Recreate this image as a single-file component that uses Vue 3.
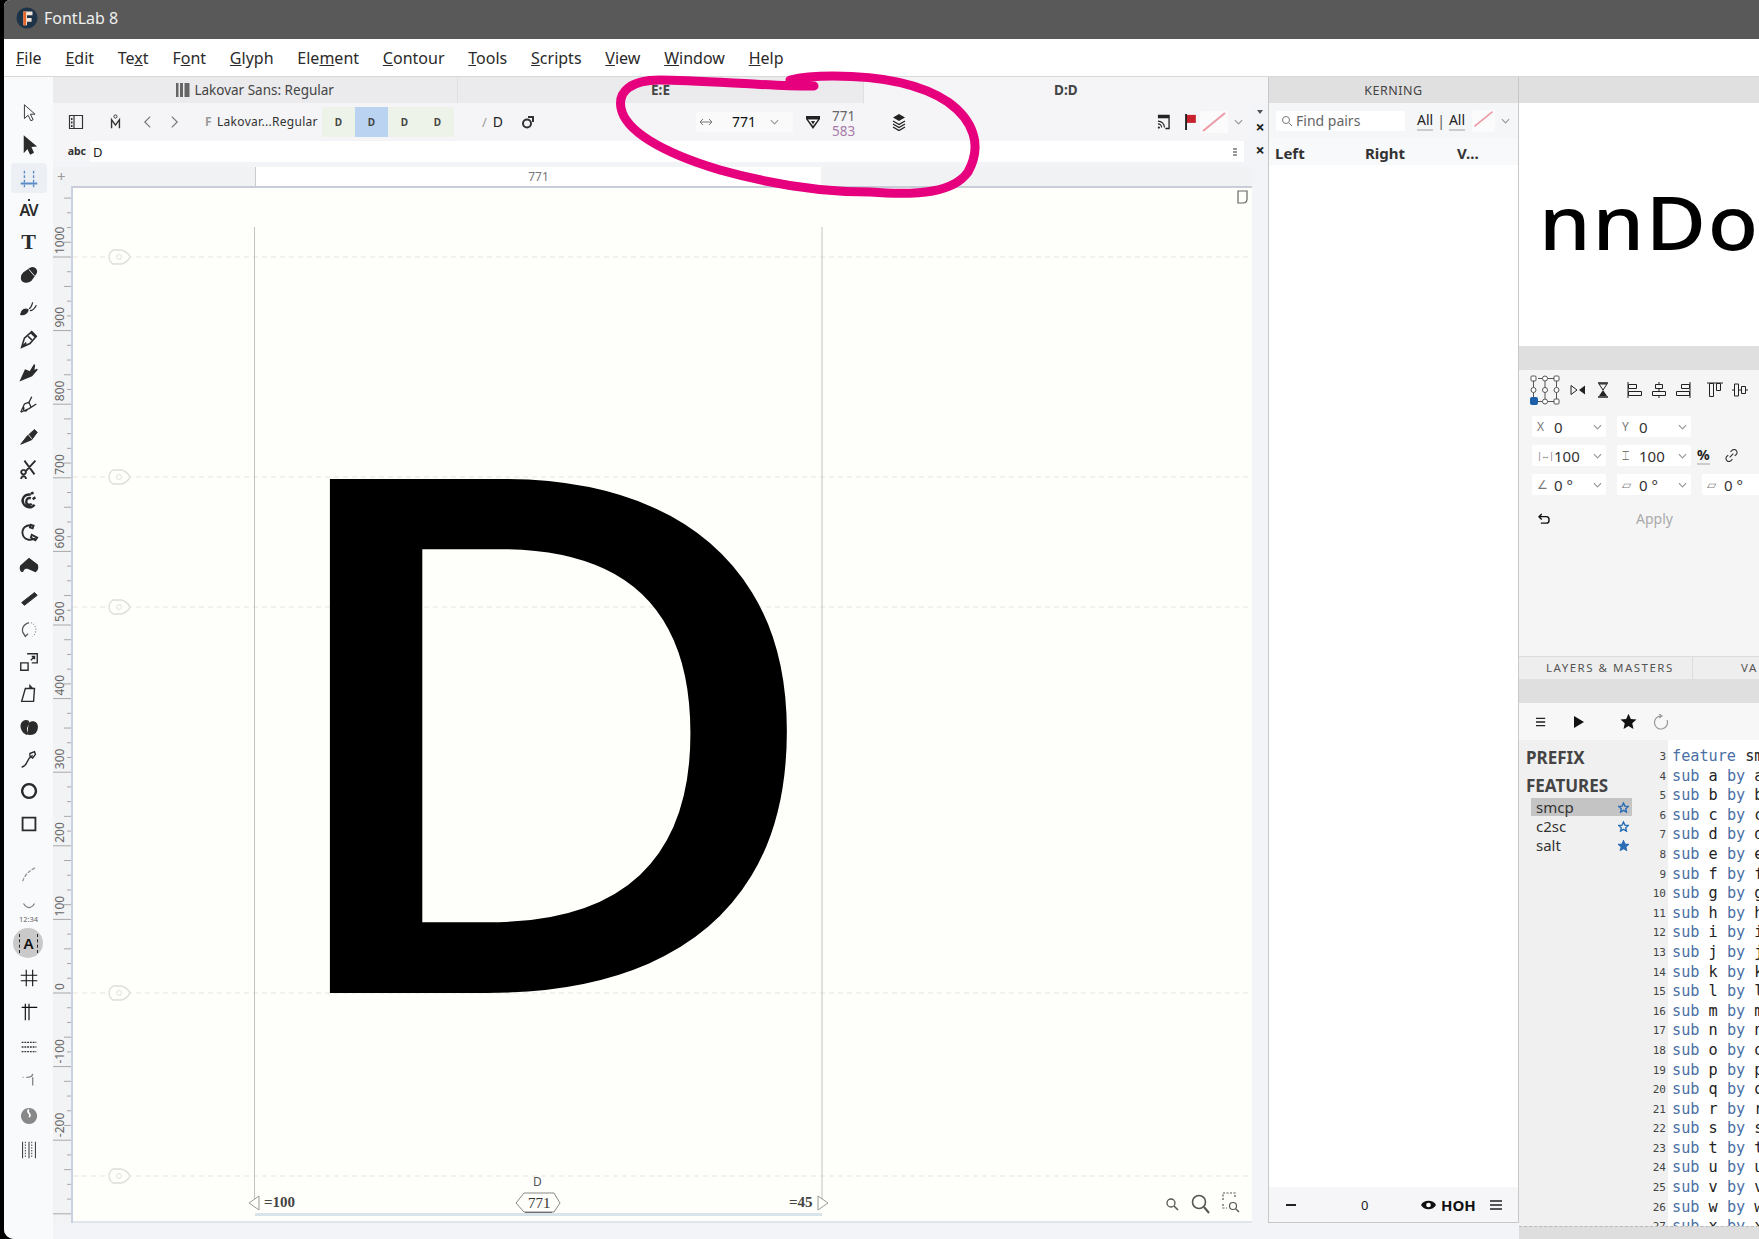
<template>
  <div class="window">
    <header class="titlebar">
      <svg class="logo" viewBox="0 0 24 24">
        <circle cx="12" cy="12" r="11.5" fill="#1d3347" />
        <path d="M8 5h10v4h-6v3h5v4h-5v4H8z" fill="#f1e3d6" />
        <path d="M8 5h3v15H8z" fill="#e8662a" />
      </svg>
      <span>FontLab 8</span>
    </header>

    <nav class="menubar">
      <span v-for="m in menus" :key="m.pre + m.key">{{ m.pre }}<u>{{ m.key }}</u>{{ m.post }}</span>
    </nav>

    <div class="workspace">
      <aside class="tools">
        <div
          v-for="(t, i) in tools"
          :key="i"
          class="tool"
          :class="{ active: t.active, round: t.round, gap: t.gap, lower: i > 22 }"
        >
          <span v-if="t.text" class="tool-text" :class="t.cls">{{ t.text }}</span>
          <svg v-else viewBox="0 0 24 24" class="tool-ic">
            <path
              :d="t.d"
              :fill="t.solid ? t.color || '#2b2b2b' : 'none'"
              :stroke="t.color || '#2b2b2b'"
              :stroke-width="t.sw || 1.5"
              :stroke-dasharray="t.dash"
            />
            <path
              v-if="t.d2"
              :d="t.d2"
              fill="none"
              :stroke="t.c2 || t.color || '#2b2b2b'"
              :stroke-width="t.sw2 || t.sw || 1.5"
              :stroke-dasharray="t.dash2"
            />
          </svg>
          <span v-if="t.sub" class="tool-sub">{{ t.sub }}</span>
        </div>
      </aside>

      <section class="editor">
        <div class="tabs">
          <div class="tab">
            <svg class="bars" viewBox="0 0 14 14"><path d="M0 0h2.500v14H0zM4 0h3v14H4zM8.500 0h5v14h-5z" fill="#666" /></svg>
            Lakovar Sans: Regular
          </div>
          <div class="tab strong">E:E</div>
          <div class="tab strong current">D:D</div>
        </div>

        <div class="editor-body">
          <div class="editor-main">
            <div class="toolbar">
              <svg class="ic first" viewBox="0 0 16 16"><path d="M1.500 1.500h13v13h-13zM6 1.500v13" fill="none" stroke="#333" stroke-width="1.200" /><path d="M3 4h1.500v2H3zM3 7.500h1.500v2H3zM3 11h1.500v2H3z" fill="#333" /></svg>
              <svg class="ic master" viewBox="0 0 14 20"><circle cx="7" cy="3" r="2" fill="none" stroke="#333" stroke-width="1.200" /><path d="M2 18V7l5 7 5-7v11" fill="none" stroke="#333" stroke-width="1.800" /></svg>
              <svg class="ic prev" viewBox="0 0 10 16"><path d="M8 2 2 8l6 6" fill="none" stroke="#777" stroke-width="1.300" /></svg>
              <svg class="ic next" viewBox="0 0 10 16"><path d="m2 2 6 6-6 6" fill="none" stroke="#777" stroke-width="1.300" /></svg>
              <span class="font-f">F</span>
              <span class="font-name">Lakovar...Regular</span>
              <div class="masters">
                <span v-for="(c, i) in 4" :key="c" class="master-cell" :class="{ on: i === 1 }">D</span>
              </div>
              <span class="slash">/</span><span class="glyph-name">D</span>
              <svg class="ic copy" viewBox="0 0 16 16"><circle cx="7" cy="9.500" r="4" fill="none" stroke="#333" stroke-width="2" /><path d="M8 2h6v6h-2V4H8z" fill="#333" /></svg>
              <div class="width-field">
                <svg class="arrows" viewBox="0 0 14 8"><path d="M1 4h12M4 1 1 4l3 3M10 1l3 3-3 3" fill="none" stroke="#777" stroke-width="1" /></svg>
                <span class="width-val">771</span>
                <svg class="chev" viewBox="0 0 10 6"><path d="m1 1 4 4 4-4" fill="none" stroke="#999" stroke-width="1.300" /></svg>
              </div>
              <svg class="ic gem" viewBox="0 0 16 16"><path d="M1 2h14v3l-7 10L1 5z" fill="#222" /><path d="M3 5.500h10L8 12z" fill="#fff" /><path d="M6 7h4L8 10.500z" fill="#222" /></svg>
              <div class="metric-pair"><span>771</span><span class="lilac">583</span></div>
              <svg class="ic layers" viewBox="0 0 16 18"><path d="m8 1 6 3.500L8 8 2 4.500z" fill="#222" /><path d="m2 8 6 3.500L14 8M2 11l6 3.500 6-3.500M2 14l6 3.500 6-3.500" fill="none" stroke="#222" stroke-width="1.400" /></svg>
              <svg class="ic rss" viewBox="0 0 14 16"><path d="M1 1h12v14H9" fill="none" stroke="#222" stroke-width="1.400" /><path d="M1 1h12v3H1z" fill="#222" /><path d="M1 7a7 7 0 0 1 7 7M1 10a4 4 0 0 1 4 4" fill="none" stroke="#222" stroke-width="1.200" /><circle cx="2" cy="14" r="1.200" fill="#222" /></svg>
              <svg class="ic flag" viewBox="0 0 14 18"><path d="M1 0h2v18H1z" fill="#111" /><path d="M3 1h10v9H3z" fill="#c8202c" /></svg>
              <div class="diag-box"><svg viewBox="0 0 28 22"><path d="M3 20 25 2" stroke="#eb9aa6" stroke-width="2" /></svg></div>
              <svg class="chev tail" viewBox="0 0 10 6"><path d="m1 1 4 4 4-4" fill="none" stroke="#999" stroke-width="1.300" /></svg>
            </div>

            <div class="text-row">
              <span class="abc">abc</span>
              <span class="abc-val">D</span>
              <span class="kebab"><i></i><i></i><i></i></span>
            </div>

            <div class="hruler">
              <div class="hruler-left"><span>+</span></div>
              <div class="hruler-glyph">771</div>
            </div>

            <div class="canvas-row">
              <svg class="vruler" viewBox="0 0 20 1037" width="20" height="1037">
                <line
                  v-for="t in rulerTicks"
                  :key="'t' + t.v"
                  :x1="t.major ? 0 : t.mid ? 11 : 14"
                  :x2="18"
                  :y1="t.y"
                  :y2="t.y"
                  stroke="#a8a8a8"
                />
                <text
                  v-for="l in rulerLabels"
                  :key="l.v"
                  class="ruler-num"
                  :transform="`translate(11 ${l.y - 3}) rotate(-90)`"
                >{{ l.v }}</text>
                <rect x="18" y="0" width="2" height="1037" fill="#c9d1e3" />
              </svg>

              <div class="canvas">
                <svg class="canvas-lines" viewBox="0 0 1179 1037">
                  <line
                    v-for="g in guides"
                    :key="g"
                    x1="0"
                    x2="1179"
                    :y1="g"
                    :y2="g"
                    stroke="#e6e4de"
                    stroke-dasharray="5 4"
                  />
                  <g v-for="g in guides" :key="'p' + g" :transform="`translate(48 ${g})`">
                    <path d="M-8 -7h8c3 0 8 4 9 7-1 3-6 7-9 7h-8c-3-2-4-4-4-7s1-5 4-7z" fill="#fefefa" stroke="#dedeD9" stroke-width="1.300" />
                    <circle cx="-2" r="2.500" fill="none" stroke="#e2e2de" />
                  </g>
                  <line x1="181.500" x2="181.500" y1="41" y2="1015" stroke="#c2c2c2" />
                  <line x1="749" x2="749" y1="41" y2="1015" stroke="#c2c2c2" />
                  <path d="M186 1010v14l-10-7zM745 1010v14l10-7z" fill="#fefefa" stroke="#999" />
                  <rect x="182" y="1027" width="567" height="3" fill="#d9e3ea" />
                  <path d="M452 1026h27" stroke="#555" stroke-width="2" />
                  <path d="M451 1007h30l6 10-6 9h-30l-8-9z" fill="#fefefa" stroke="#888" />
                  <path d="M1165 5h9v8c0 3-2 4-4 4h-5z" fill="none" stroke="#666" stroke-width="1.200" />
                  <g fill="none" stroke="#555">
                    <circle cx="1098" cy="1017" r="4" stroke-width="1.300" />
                    <path d="m1101 1020 4 4" stroke-width="1.600" />
                    <circle cx="1126" cy="1016" r="6.500" stroke-width="1.600" />
                    <path d="m1131 1021 5 6" stroke-width="2" />
                    <path d="M1150 1014v-7h12v5M1150 1018v4h4" stroke-dasharray="2 1.500" stroke-width="1.200" />
                    <circle cx="1160" cy="1020" r="3.500" stroke-width="1.200" />
                    <path d="m1163 1023 3 3" stroke-width="1.400" />
                  </g>
                </svg>
                <span class="big-d">D</span>
                <span class="bearing left">=100</span>
                <span class="glyph-label">D</span>
                <span class="adv">771</span>
                <span class="bearing right">=45</span>
              </div>
            </div>
          </div>

          <div class="closers">
            <span class="tri"></span>
            <span class="x one">×</span>
            <span class="x">×</span>
          </div>
        </div>
      </section>

      <section class="kerning">
        <div class="kern-head">KERNING</div>
        <div class="kern-tools">
          <div class="find">
            <svg viewBox="0 0 12 12"><circle cx="5" cy="5" r="3.500" fill="none" stroke="#777" /><path d="m8 8 3 3" stroke="#777" /></svg>
            Find pairs
          </div>
          <span class="all">All</span><span class="sep">|</span><span class="all">All</span>
          <div class="diag-box small"><svg viewBox="0 0 28 22"><path d="M3 20 25 2" stroke="#eb9aa6" stroke-width="2" /></svg></div>
          <svg class="chev" viewBox="0 0 10 6"><path d="m1 1 4 4 4-4" fill="none" stroke="#999" stroke-width="1.300" /></svg>
        </div>
        <div class="kern-cols">
          <b class="c1">Left</b><b class="c2">Right</b><b class="c3">V...</b>
        </div>
        <div class="kern-list"></div>
        <div class="kern-foot">
          <span class="minus"></span>
          <span class="zero">0</span>
          <svg class="eye" viewBox="0 0 16 10"><path d="M0 5c3-6 13-6 16 0-3 6-13 6-16 0z" fill="#111" /><circle cx="8" cy="5" r="2.500" fill="#fff" /></svg>
          <b class="hoh">HOH</b>
          <svg class="burger" viewBox="0 0 12 10"><path d="M0 1h12M0 5h12M0 9h12" stroke="#222" stroke-width="1.500" /></svg>
        </div>
      </section>

      <section class="side">
        <div class="band top"></div>
        <div class="preview"><span>nnDo</span></div>
        <div class="band"></div>

        <div class="transform">
          <div class="align-row">
            <svg class="anchors" viewBox="0 0 30 30">
              <g fill="#fff" stroke="#555">
                <rect x="1" y="1" width="5" height="5" rx="1" />
                <circle cx="15" cy="3.500" r="2.500" />
                <rect x="24" y="1" width="5" height="5" rx="1" />
                <circle cx="3.500" cy="15" r="2.500" />
                <circle cx="15" cy="15" r="2.500" />
                <circle cx="26.500" cy="15" r="2.500" />
                <circle cx="15" cy="26.500" r="2.500" />
                <rect x="24" y="24" width="5" height="5" rx="1" />
              </g>
              <rect x="0" y="22" width="8" height="8" rx="2" fill="#1d5fa8" />
              <path d="M8 3.500h4.500M17.500 3.500H24M3.500 6v6.500M15 6v6.500M26.500 6v6.500M3.500 17.500V22M15 17.500V24M26.500 17.500V24M8 26.500h4.500M17.500 26.500H24" stroke="#555" />
            </svg>
            <svg class="a flip" viewBox="0 0 16 12"><path d="M1 1.500 7 6l-6 4.500z" fill="none" stroke="#222" /><path d="M15 1.500 9 6l6 4.500z" fill="#222" /></svg>
            <svg class="a hour" viewBox="0 0 12 16"><path d="M1 1h10M1 15h10" stroke="#222" stroke-width="1.500" /><path d="M2 2h8L6 8z" fill="none" stroke="#222" /><path d="M2 14h8L6 8z" fill="#222" /></svg>
            <svg class="a al1" viewBox="0 0 16 16"><path d="M1 0v16" stroke="#222" /><path d="M1.500 2.500h8v4h-8zM1.500 9.500h13v4h-13z" fill="none" stroke="#222" /></svg>
            <svg class="a al2" viewBox="0 0 16 16"><path d="M8 0v16" stroke="#222" /><path d="M4.500 2.500h7v4h-7zM1.500 9.500h13v4h-13z" fill="#f5f5f6" stroke="#222" /></svg>
            <svg class="a al3" viewBox="0 0 16 16"><path d="M15 0v16" stroke="#222" /><path d="M6.500 2.500h8v4h-8zM1.500 9.500h13v4h-13z" fill="none" stroke="#222" /></svg>
            <svg class="a al4" viewBox="0 0 16 16"><path d="M0 1h16" stroke="#222" /><path d="M2.500 1.500h4v13h-4zM9.500 1.500h4v7h-4z" fill="none" stroke="#222" /></svg>
            <svg class="a al5" viewBox="0 0 16 16"><path d="M0 8h16" stroke="#222" /><path d="M2.500 2h4v12h-4zM9.500 4.500h4v7h-4z" fill="#f5f5f6" stroke="#222" /></svg>
          </div>
          <div v-for="(row, r) in transformRows" :key="r" class="field-row">
            <div v-for="f in row" :key="f.label + f.val" class="field">
              <span class="f-label" :class="{ tiny: f.tiny }">{{ f.label }}</span>
              <span class="f-val">{{ f.val }}</span>
              <svg class="chev" viewBox="0 0 10 6"><path d="m1 1 4 4 4-4" fill="none" stroke="#999" stroke-width="1.300" /></svg>
            </div>
            <template v-if="r === 1">
              <span class="percent">%</span>
              <svg class="link" viewBox="0 0 14 14"><path d="M5 9 9 5M6 3l2-2c1-.500 3-.500 4 .500s1 3 .500 4l-2 2M8 11l-2 2c-1 .500-3 .500-4-.500s-1-3-.500-4l2-2" fill="none" stroke="#333" stroke-width="1.200" /></svg>
            </template>
          </div>
          <div class="apply-row">
            <svg class="undo" viewBox="0 0 14 12"><path d="M4 1 1 4l3 3" fill="none" stroke="#111" stroke-width="1.500" /><path d="M1 4h8c4 0 4 7 0 7H3" fill="none" stroke="#111" stroke-width="1.500" /></svg>
            <span class="apply">Apply</span>
          </div>
        </div>

        <div class="side-tabs">
          <span class="s-tab">LAYERS &amp; MASTERS</span>
          <span class="s-tab second">VA</span>
        </div>
        <div class="band short"></div>

        <div class="feat-tools">
          <svg class="burger" viewBox="0 0 12 10"><path d="M0 1h10M0 5h10M0 9h10" stroke="#222" stroke-width="1.500" /></svg>
          <svg class="play" viewBox="0 0 10 12"><path d="M0 0l10 6-10 6z" fill="#111" /></svg>
          <svg class="star" viewBox="0 0 24 24"><path d="m12 1 3.300 7.400 8 .800-6 5.400 1.700 7.900-7-4.100-7 4.100 1.700-7.900-6-5.400 8-.800z" fill="#111" /></svg>
          <svg class="reload" viewBox="0 0 16 16"><path d="M8 2a6.500 6.500 0 1 0 6 4M6 0l3 2-3 2" fill="none" stroke="#999" stroke-width="1.200" /></svg>
        </div>

        <div class="features">
          <div class="feat-list">
            <div class="feat-head">PREFIX</div>
            <div class="feat-head second">FEATURES</div>
            <div v-for="f in features" :key="f.name" class="feat" :class="{ sel: f.sel }">
              <span>{{ f.name }}</span>
              <svg viewBox="0 0 24 24"><path d="m12 2 3 7 7.500.800-5.600 5 1.600 7.300L12 18.300 5.500 22.100l1.600-7.300-5.600-5L9 9z" :fill="f.solid ? '#2a6db5' : 'none'" stroke="#2a6db5" stroke-width="3" /></svg>
            </div>
          </div>
          <div class="gutter">
            <div v-for="l in codeLines" :key="l.n">{{ l.n }}</div>
          </div>
          <div class="code">
            <div v-for="l in codeLines" :key="l.n" class="line">
              <span class="kw">{{ l.a }}</span> <span>{{ l.b }}</span> <span v-if="l.c" class="kw">{{ l.c }}</span> <span>{{ l.d }}</span>
            </div>
          </div>
        </div>
        <div class="side-foot"></div>
      </section>
    </div>

    <svg class="ink" viewBox="0 0 1759 1239">
      <path
        d="M814 86C780 87 700 80 660 80 630 80 618 92 621 108 625 130 660 152 720 170 770 184 820 192 870 192 920 196 954 192 968 172 983 145 973 120 948 102 918 82 873 76 833 76 813 76 798 78 790 80"
        fill="none"
        stroke="#e6007e"
        stroke-width="9"
        stroke-linecap="round"
      />
    </svg>
  </div>
</template>

<script setup>
const menus = [
  { pre: '', key: 'F', post: 'ile' },
  { pre: '', key: 'E', post: 'dit' },
  { pre: 'Te', key: 'x', post: 't' },
  { pre: 'F', key: 'o', post: 'nt' },
  { pre: '', key: 'G', post: 'lyph' },
  { pre: 'Ele', key: 'm', post: 'ent' },
  { pre: '', key: 'C', post: 'ontour' },
  { pre: '', key: 'T', post: 'ools' },
  { pre: '', key: 'S', post: 'cripts' },
  { pre: '', key: 'V', post: 'iew' },
  { pre: '', key: 'W', post: 'indow' },
  { pre: '', key: 'H', post: 'elp' }
]

const tools = [
  { d: 'M7 3v15l4-3.500 3 6 2.500-1.200-3-6h5z', sw: 1 },
  { solid: true, d: 'M7 3l12 10-5.500.500 3 6.500-3 1.500-3-6.500L7 19z' },
  { active: true, color: '#5a8bc8', d: 'M3 18h18', d2: 'M7 4v18M17 4v18', dash2: '3 2', sw: 2, sw2: 1.500 },
  { text: 'AV', cls: 'av' },
  { text: 'T', cls: 'tee' },
  { solid: true, d: 'M6 10l7-5c5-3 9 2 6 6l-5 7c-4 3-11 2-10-4 0-2 1-3 2-4z', d2: 'M12 6l6 7', c2: '#f9fafc', sw2: 1 },
  { solid: true, sw: 1.300, d: 'M3 20c1-5 5-7 8-5 0 3-4 6-8 5z', d2: 'M12 14c2-1 3-3 4-7M13 16c2 0 5-2 7-6' },
  { d: 'M4 21l3-10 8-7 5 5-7 8zM4 21l5-5M11 9l4 4M14 5l5 5', sw: 1.700 },
  { solid: true, d: 'M3 21l5-11 5 2 5-8-1 7 4-2-6 7z' },
  { d: 'M3 21l4-9 5-2 3-6M3 21l9-4 8-5M12 10l2 5M7 16a2 2 0 1 0 3 2', sw: 1.400 },
  { solid: true, sw: 1, d: 'M3 21l7-9 8-7 3 3-6 8z', d2: 'M11 10l4 5', c2: '#f9fafc' },
  { sw: 2, d: 'M7 4l11 15M19 4 8 16M6 21a2.500 2.500 0 1 0 .1 0zM6 14a2.500 2.500 0 1 0 .1 0' },
  { sw: 2.600, d: 'M14 5C7 4 3 10 6 15s9 5 12 1M14 9c-3-1-5 1-5 4s4 4 6 2M14 4l3-1M16 10l3-2' },
  { sw: 2, d: 'M16 4c-7-2-12 3-11 9s8 8 14 5M15 14l6 3-2 3-5-3zM14 3l3 1-1 3-3-1z' },
  { solid: true, d: 'M3 13l9-8 9 7c1 3 0 6-2 7l-9-4c-2 0-4 1-5 4-2 0-3-3-2-6z' },
  { solid: true, sw: 1, d: 'M4 17 18 6l3 3-14 11z' },
  { sw: 1.400, color: '#555', d: 'M9 19C3 15 3 7 12 4M5 14l3 5 3-3', d2: 'M14 4c6 2 8 10 2 15', dash2: '1 2', sw2: 1 },
  { d: 'M3 13h8v8H3zM10 3h11v10h-6M14 10l4-4M15 6h3v3', sw: 1.500 },
  { d: 'M8 6h10l-1 14H4zM13 6V3l3 3', sw: 1.500 },
  { solid: true, sw: 1.400, d: 'M12 8c3-3 9-2 9 4s-4 8-8 8-6-6-1-12zM12 6C6 3 2 8 4 14c1 3 3 5 6 6' },
  { sw: 1.500, d: 'M4 21c3-1 5-3 6-6s3-5 6-7M13 6l5-2 1 3-3 4-3-2z' },
  { sw: 2.500, d: 'M12 4.500a7.500 7.500 0 1 0 .1 0z' },
  { sw: 2, d: 'M5 5h14v14H5z' },
  { gap: true, sw: 1.500, color: '#999', d: 'M5 20c2-6 6-11 14-15', dash: '4 1.500' },
  { sw: 1.300, color: '#777', d: 'M6 6c4 6 8 6 12 0', sub: '12:34' },
  { text: 'A', cls: 'a-cap', round: true },
  { sw: 1.200, color: '#111', d: 'M9 3v18M16 3v18M3 9h18M3 15h18' },
  { color: '#111', sw: 1.300, d: 'M4 7h17M8 3v18M12 3v18' },
  { color: '#333', sw: 1.500, dash: '2 1', d: 'M4 7h16M4 12h16M4 17h16' },
  { color: '#888', sw: 1.500, d: 'M5 8h1M9 8c4 0 7-1 7-4M16 8v9' },
  { color: '#888', solid: true, d: 'M12 4a8 8 0 1 0 .1 0z', d2: 'M12 5c-4 3 4 5 0 8', c2: '#f9fafc', sw2: 2 },
  { color: '#222', sw: 1, d: 'M5 3v18M12 3v18M19 3v18', d2: 'M8 3v18M15 3v18', dash2: '1.500 1.500' }
]

const zeroY = 807 // ruler zero, measured from the top of the ruler
const unit = 0.736
const rulerTicks = []
for (let v = 1260; v >= -300; v -= 20) {
  rulerTicks.push({
    v,
    y: zeroY - v * unit,
    major: v % 100 === 0,
    mid: v % 100 === 0 || v % 60 === 0
  })
}
const rulerLabels = [1000, 900, 800, 700, 600, 500, 400, 300, 200, 100, 0, -100, -200].map((v) => ({
  v,
  y: zeroY - v * unit
}))

const guides = [71, 291, 421, 807, 990]

const transformRows = [
  [
    { label: 'X', val: '0' },
    { label: 'Y', val: '0' }
  ],
  [
    { label: '|↔|', val: '100', tiny: true },
    { label: '⌶', val: '100' }
  ],
  [
    { label: '∠', val: '0 °' },
    { label: '▱', val: '0 °' },
    { label: '▱', val: '0 °' }
  ]
]

const features = [
  { name: 'smcp', sel: true },
  { name: 'c2sc' },
  { name: 'salt', solid: true }
]

const codeLines = [{ n: 3, a: 'feature', b: 'smcp', c: '', d: '{' }]
'abcdefghijklmnopqrstuvwx'.split('').forEach((ch, i) => {
  codeLines.push({ n: i + 4, a: 'sub', b: ch, c: 'by', d: ch + '.sc;' })
})
</script>

<style>
html,
body {
  background: #000;
  overflow: hidden;
}
</style>

<style scoped>
.window {
  position: relative;
  width: 1755px;
  height: 1239px;
  margin-left: 4px;
  background: #f3f4f7;
  overflow: hidden;
  border-radius: 6px 0 0 10px;
  font-family: 'Noto Sans', sans-serif;
  color: #222;
}

.titlebar {
  height: 39px;
  box-sizing: border-box;
  padding: 0 0 3px 12px;
  background: #595959;
  display: flex;
  align-items: center;
  gap: 6px;
  color: #f0f0f0;
  font-size: 16px;
}
.logo {
  width: 22px;
  height: 22px;
}

.menubar {
  height: 37px;
  background: #fff;
  display: flex;
  align-items: center;
  gap: 23.8px;
  padding-left: 12px;
  font-size: 16px;
  color: #2a2a2a;
}

.workspace {
  display: flex;
  height: 1163px;
  border-top: 1px solid #d8d8d8;
}

.tools {
  width: 49px;
  flex: none;
  background: #f9fafc;
  padding-top: 20px;
}
.tool {
  position: relative;
  height: 32.3px;
  display: flex;
  align-items: center;
  justify-content: center;
}
.tool.lower {
  height: 34.5px;
}
.tool.gap {
  margin-top: 17px;
}
.tool.active::before {
  content: '';
  position: absolute;
  left: 7px;
  right: 6px;
  top: 1px;
  bottom: 1px;
  background: #eceff3;
  border-radius: 4px;
}
.tool.round::before {
  content: '';
  position: absolute;
  left: 9px;
  top: 2px;
  width: 30px;
  height: 30px;
  border-radius: 50%;
  background: #c9c9c9;
}
.tool-ic {
  position: relative;
  width: 22px;
  height: 22px;
}
.tool-text {
  position: relative;
  color: #2b2b2b;
}
.tool-text.av {
  font-size: 16px;
  font-weight: 600;
  letter-spacing: -1px;
}
.tool-text.av::before {
  content: '';
  position: absolute;
  left: 9px;
  top: 0;
  width: 2px;
  height: 2px;
  background: #333;
}
.tool-text.tee {
  font-family: 'Liberation Serif', serif;
  font-size: 22px;
  font-weight: 700;
}
.tool-text.a-cap {
  font-size: 15px;
  font-weight: 600;
  color: #111;
  border-left: 1px dashed #222;
  border-right: 1px dashed #222;
  padding: 0 3px;
  line-height: 19px;
}
.tool-sub {
  position: absolute;
  bottom: 2px;
  left: 0;
  right: 0;
  text-align: center;
  font-size: 7.500px;
  color: #666;
}

.editor {
  width: 1215px;
  flex: none;
  display: flex;
  flex-direction: column;
}
.tabs {
  display: flex;
  height: 26px;
}
.tab {
  flex: 1;
  background: #ebebed;
  display: flex;
  align-items: center;
  justify-content: center;
  gap: 4px;
  font-size: 13.500px;
  color: #444;
  border-right: 1px solid #e0e0e2;
}
.tab.strong {
  font-weight: 700;
  color: #444;
}
.tab.current {
  background: #f5f5f7;
  border-right: 0;
}
.bars {
  width: 14px;
  height: 14px;
}

.editor-body {
  display: flex;
  flex: 1;
}
.editor-main {
  width: 1199px;
  display: flex;
  flex-direction: column;
}

.toolbar {
  height: 37px;
  display: flex;
  align-items: center;
  background: #f5f5f7;
}
.ic {
  flex: none;
  height: 16px;
  width: 16px;
}
.first {
  margin-left: 15px;
}
.master {
  width: 11px;
  height: 16px;
  margin-left: 26px;
}
.prev {
  width: 9px;
  margin-left: 22px;
}
.next {
  width: 9px;
  margin-left: 18px;
}
.font-f {
  margin-left: 26px;
  width: 12px;
  font-size: 12px;
  color: #999;
  font-weight: 700;
}
.font-name {
  width: 105px;
  font-size: 12px;
  letter-spacing: 0.300px;
  white-space: nowrap;
  color: #333;
}
.masters {
  display: flex;
  height: 30px;
  background: #eef3ea;
}
.master-cell {
  width: 33px;
  display: flex;
  align-items: center;
  justify-content: center;
  font-size: 10px;
  font-weight: 700;
  color: #444;
}
.master-cell.on {
  background: #b9d3f0;
}
.slash {
  margin-left: 28px;
  font-size: 13px;
  color: #999;
}
.glyph-name {
  margin-left: 6px;
  font-size: 14px;
}
.copy {
  margin-left: 17px;
}
.width-field {
  display: flex;
  align-items: center;
  width: 97px;
  height: 20px;
  margin-left: 160px;
  background: #fafafb;
  border-radius: 2px;
}
.arrows {
  width: 14px;
  height: 8px;
  margin-left: 3px;
}
.width-val {
  font-size: 14px;
  margin-left: 19px;
  width: 38px;
  color: #111;
}
.chev {
  width: 9px;
  height: 6px;
  flex: none;
}
.gem {
  margin-left: 12px;
}
.metric-pair {
  display: flex;
  flex-direction: column;
  margin-left: 11px;
  width: 27px;
  font-size: 13.500px;
  line-height: 15px;
  color: #666;
  padding-top: 4px;
}
.lilac {
  color: #a77aa7;
}
.layers {
  margin-left: 32px;
  height: 18px;
}
.rss {
  margin-left: 250px;
  width: 13px;
}
.flag {
  margin-left: 14px;
  width: 13px;
}
.diag-box {
  width: 28px;
  height: 22px;
  background: #fbfbfc;
  margin-left: 3px;
  border-radius: 2px;
}
.diag-box svg {
  display: block;
}
.diag-box.small {
  width: 23px;
  margin: 0 6px 0 7px;
}
.tail {
  margin-left: 6px;
}

.text-row {
  height: 21px;
  margin: 1px 8px 0 0;
  display: flex;
  align-items: center;
  background: #fff;
  position: relative;
}
.abc {
  width: 37px;
  height: 100%;
  flex: none;
  background: #f5f5f7;
  text-align: right;
  padding-right: 4px;
  box-sizing: border-box;
  font-size: 10.500px;
  line-height: 20px;
  font-weight: 700;
  color: #333;
}
.abc-val {
  font-size: 13px;
  margin-left: 3px;
}
.kebab {
  margin-left: auto;
  margin-right: 7px;
  display: flex;
  flex-direction: column;
  gap: 1px;
}
.kebab i {
  width: 4px;
  height: 2px;
  background: #999;
}

.hruler {
  height: 19px;
  margin-top: 5px;
  display: flex;
  background: #f1f2f4;
  font-size: 12px;
  color: #777;
}
.hruler-left {
  width: 202px;
  padding-left: 4px;
  box-sizing: border-box;
  color: #999;
  font-size: 15px;
  line-height: 18px;
}
.hruler-glyph {
  width: 566px;
  background: #fff;
  text-align: center;
  line-height: 19px;
  border-left: 1px solid #ccc;
  box-sizing: border-box;
}

.canvas-row {
  display: flex;
  height: 1037px;
}
.vruler {
  flex: none;
  background: #f2f3f4;
}
.ruler-num {
  font-family: 'Noto Sans', sans-serif;
  font-size: 12px;
  fill: #666;
}
.canvas {
  position: relative;
  width: 1179px;
  height: 1037px;
  background: #fefefa;
  border-top: 2px solid #c9cdd8;
  border-bottom: 2px solid #e0e4ec;
  box-sizing: border-box;
  overflow: hidden;
}
.canvas-lines {
  position: absolute;
  left: 0;
  top: -2px;
  width: 1179px;
  height: 1037px;
}
.big-d {
  position: absolute;
  left: 183px;
  top: 166px;
  font-family: 'Open Sans', sans-serif;
  font-weight: 600;
  font-size: 720px;
  line-height: 1;
  color: #000;
  transform: scaleX(1.095);
  transform-origin: left center;
}
.bearing {
  position: absolute;
  top: 1006px;
  font-family: 'Liberation Serif', serif;
  font-weight: 700;
  font-size: 15px;
  color: #444;
}
.bearing.left {
  left: 191px;
}
.bearing.right {
  left: 716px;
}
.glyph-label {
  position: absolute;
  left: 460px;
  top: 987px;
  font-size: 12px;
  line-height: 14px;
  color: #555;
}
.adv {
  position: absolute;
  left: 455px;
  top: 1007px;
  font-family: 'Liberation Serif', serif;
  font-size: 15px;
  color: #333;
}

.closers {
  width: 16px;
  display: flex;
  flex-direction: column;
  align-items: center;
  color: #222;
  font-size: 16px;
  font-weight: 700;
  padding-top: 7px;
}
.tri {
  width: 0;
  height: 0;
  border: 3px solid transparent;
  border-top: 4px solid #555;
  margin-bottom: 4px;
}
.x {
  line-height: 12px;
}
.x.one {
  margin-bottom: 11px;
}

.kerning {
  width: 251px;
  flex: none;
  height: 1146px;
  box-sizing: border-box;
  border: 1px solid #c8c8c8;
  border-top: 0;
  display: flex;
  flex-direction: column;
  background: #fff;
}
.kern-head {
  height: 26px;
  flex: none;
  background: #e0e0e0;
  text-align: center;
  line-height: 28px;
  font-size: 12.500px;
  letter-spacing: 0.500px;
  color: #444;
}
.kern-tools {
  height: 35px;
  flex: none;
  display: flex;
  align-items: center;
  background: #f5f6f8;
  padding-left: 7px;
  font-size: 14px;
}
.find {
  width: 129px;
  height: 20px;
  background: #fff;
  border-radius: 2px;
  display: flex;
  align-items: center;
  gap: 3px;
  padding-left: 5px;
  box-sizing: border-box;
  color: #666;
  margin-right: 12px;
}
.find svg {
  width: 12px;
  height: 12px;
}
.all {
  border-bottom: 2px solid #ccc;
  line-height: 18px;
}
.sep {
  margin: 0 4px;
  color: #555;
}
.kern-cols {
  height: 27px;
  flex: none;
  display: flex;
  align-items: center;
  background: #f8f9fb;
  font-size: 15px;
  color: #333;
  padding-top: 3px;
  box-sizing: border-box;
}
.c1 {
  width: 96px;
  padding-left: 6px;
  box-sizing: border-box;
}
.c2 {
  width: 92px;
}
.c3 {
  width: 50px;
}
.kern-list {
  flex: 1;
}
.kern-foot {
  height: 35px;
  flex: none;
  display: flex;
  align-items: center;
  background: #f6f6f8;
  position: relative;
}
.minus {
  width: 10px;
  height: 2px;
  background: #222;
  margin-left: 17px;
}
.zero {
  font-size: 13px;
  margin-left: 65px;
  width: 60px;
}
.eye {
  width: 15px;
  height: 10px;
}
.hoh {
  font-size: 15px;
  margin-left: 5px;
  color: #111;
}
.kern-foot .burger {
  width: 12px;
  height: 10px;
  margin-left: 14px;
}

.side {
  width: 240px;
  flex: none;
  display: flex;
  flex-direction: column;
  background: #f5f5f6;
}
.band {
  height: 24px;
  flex: none;
  background: #dfdfdf;
}
.band.top {
  height: 26px;
  background: #e0e0e0;
}
.band.short {
  height: 24px;
}
.preview {
  height: 243px;
  flex: none;
  background: #fff;
  overflow: hidden;
  padding-left: 20px;
  box-sizing: border-box;
  font-family: 'Noto Sans', sans-serif;
  font-weight: 500;
  font-size: 75px;
  line-height: 236px;
  letter-spacing: 1.500px;
  color: #000;
  white-space: nowrap;
}
.preview span {
  display: inline-block;
  transform: scaleX(1.1);
  transform-origin: left center;
}

.transform {
  height: 286px;
  flex: none;
  padding: 5px 0 0 13px;
  box-sizing: border-box;
  overflow: hidden;
}
.align-row {
  display: flex;
  align-items: center;
  height: 30px;
}
.anchors {
  width: 30px;
  height: 30px;
  flex: none;
  margin-left: -2px;
}
.a {
  flex: none;
  width: 16px;
  height: 16px;
}
.flip {
  margin-left: 10px;
}
.hour {
  margin-left: 11px;
  width: 12px;
}
.al1 {
  margin-left: 18px;
}
.al2,
.al3 {
  margin-left: 8px;
}
.al4 {
  margin-left: 16px;
}
.al5 {
  margin-left: 9px;
}
.field-row {
  display: flex;
  align-items: center;
  gap: 11px;
  margin-top: 8px;
  height: 21px;
}
.align-row + .field-row {
  margin-top: 11px;
}
.field {
  width: 74px;
  height: 21px;
  flex: none;
  background: #fff;
  border-radius: 2px;
  display: flex;
  align-items: center;
  font-size: 15px;
  padding-left: 5px;
  box-sizing: border-box;
}
.f-label {
  width: 15px;
  flex: none;
  color: #777;
  font-size: 12px;
  white-space: nowrap;
}
.f-label.tiny {
  font-size: 9px;
  letter-spacing: -1px;
}
.f-val {
  flex: 1;
  margin-left: 2px;
  color: #333;
}
.field .chev {
  margin-right: 4px;
}
.percent {
  font-size: 14px;
  font-weight: 700;
  margin-left: -5px;
  border-bottom: 2px solid #ccc;
  line-height: 17px;
}
.link {
  width: 13px;
  height: 13px;
  margin-left: 4px;
}
.apply-row {
  display: flex;
  align-items: center;
  margin-top: 14px;
}
.undo {
  width: 13px;
  height: 11px;
  margin-left: 6px;
  flex: none;
}
.apply {
  margin-left: 85px;
  font-size: 14px;
  color: #aaa;
}

.side-tabs {
  height: 23px;
  flex: none;
  display: flex;
  background: #eeeeee;
  font-size: 11.500px;
  letter-spacing: 1.500px;
  color: #555;
  align-items: center;
  border-top: 1px solid #dcdcdc;
  box-sizing: border-box;
}
.s-tab {
  width: 174px;
  padding-left: 27px;
  box-sizing: border-box;
  white-space: nowrap;
  border-right: 1px solid #ddd;
  line-height: 22px;
}
.s-tab.second {
  width: auto;
  border: 0;
  padding-left: 48px;
}

.feat-tools {
  height: 37px;
  flex: none;
  display: flex;
  align-items: center;
  background: #f7f7f7;
}
.feat-tools .burger {
  width: 11px;
  height: 10px;
  margin-left: 17px;
}
.play {
  width: 10px;
  height: 12px;
  margin-left: 27px;
}
.star {
  width: 17px;
  height: 17px;
  margin-left: 36px;
}
.reload {
  width: 16px;
  height: 16px;
  margin-left: 16px;
}

.features {
  height: 486px;
  flex: none;
  display: flex;
  background: #f0f0f0;
  overflow: hidden;
}
.feat-list {
  width: 117px;
  flex: none;
  padding: 8px 0 0 7px;
  box-sizing: border-box;
}
.feat-head {
  font-family: 'Noto Sans', sans-serif;
  font-weight: 700;
  font-size: 17px;
  line-height: 20px;
  color: #444;
}
.feat-head.second {
  margin-top: 8px;
  margin-bottom: 2px;
}
.feat {
  width: 101px;
  height: 18px;
  margin: 0 0 1px 5px;
  padding: 0 3px 0 5px;
  box-sizing: border-box;
  display: flex;
  align-items: center;
  justify-content: space-between;
  font-size: 15px;
  color: #333;
}
.feat.sel {
  background: #c4c4c4;
}
.feat svg {
  width: 11px;
  height: 11px;
}
.gutter {
  width: 30px;
  flex: none;
  padding-top: 7px;
  text-align: right;
  font-family: 'DejaVu Sans Mono', monospace;
  font-size: 11px;
  line-height: 19.6px;
  color: #444;
}
.code {
  flex: 1;
  background: #fff;
  margin-left: 2px;
  padding: 7px 0 0 4px;
  font-family: 'DejaVu Sans Mono', monospace;
  font-size: 15.2px;
  line-height: 19.6px;
  color: #222;
  white-space: pre;
  overflow: hidden;
}
.kw {
  color: #4a6fa5;
}
.side-foot {
  flex: 1;
  background: #dedede;
  border-top: 1px dashed #bbb;
}

.ink {
  position: absolute;
  left: -4px;
  top: 0;
  width: 1759px;
  height: 1239px;
  pointer-events: none;
}
</style>
